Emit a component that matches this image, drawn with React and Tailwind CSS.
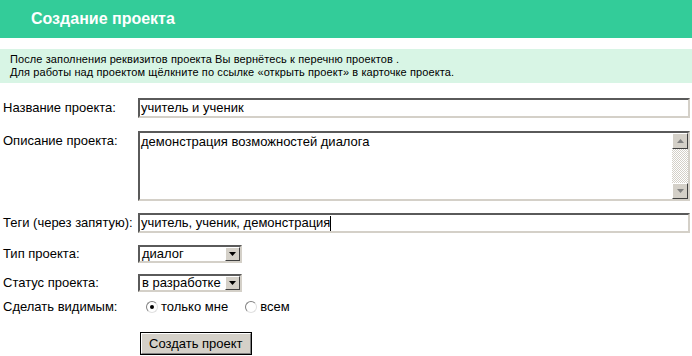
import React from 'react';

const font = "font-['Liberation_Sans',Arial,sans-serif]";
const inset = 'border-2 border-t-[#5a5a5a] border-l-[#5a5a5a] border-b-[#d4d0c8] border-r-[#d4d0c8] bg-white';

const Label = ({ children, className = '' }) => (
  <div className={`w-[138px] shrink-0 pl-[3px] text-[13px] leading-[16px] text-black ${className}`}>{children}</div>
);

const ArrowBtn = ({ dir = 'down', disabled, w = 16, h = 16 }) => (
  <div
    className="bg-[#d4d0c8] border border-t-white border-l-white border-b-[#404040] border-r-[#404040] flex items-center justify-center shrink-0"
    style={{ width: w, height: h }}
  >
    <svg width="7" height="4" viewBox="0 0 7 4">
      {dir === 'down'
        ? <path d="M0 0h7L3.5 4z" fill={disabled ? '#808080' : '#000'} />
        : <path d="M0 4h7L3.5 0z" fill={disabled ? '#808080' : '#000'} />}
    </svg>
  </div>
);

const Select = ({ value }) => (
  <div className={`${inset} w-[104px] h-[18px] flex items-center`}>
    <span className="flex-1 pl-[2px] text-[13px] leading-[14px] text-black whitespace-nowrap overflow-hidden">{value}</span>
    <ArrowBtn dir="down" w={15} h={14} />
  </div>
);

const Radio = ({ checked }) => (
  <span className="w-[12px] h-[12px] rounded-full border border-t-[#808080] border-l-[#808080] border-b-[#e0e0e0] border-r-[#e0e0e0] bg-white flex items-center justify-center">
    {checked && <span className="w-[4px] h-[4px] rounded-full bg-black" />}
  </span>
);

export default function App() {
  return (
    <div className={`w-[692px] h-[356px] bg-white overflow-hidden ${font}`}>
      <div className="h-[38px] bg-[#33cc99] flex items-center pl-[31px]">
        <h1 className="text-white font-bold text-[16px]">Создание проекта</h1>
      </div>

      <div className="mt-[11px] h-[34px] bg-[#d8f5e5] pl-[10px] pt-[4px] text-[11px] leading-[13px] tracking-[0.1px] text-black">
        <p>После заполнения реквизитов проекта Вы вернётесь к перечню проектов .</p>
        <p>Для работы над проектом щёлкните по ссылке «открыть проект» в карточке проекта.</p>
      </div>

      <div className="mt-[15px] flex flex-col">
        <div className="flex items-center">
          <Label>Название проекта:</Label>
          <div className={`${inset} flex-1 mr-[2px] h-[20px] pl-[1px] text-[13px] leading-[16px] flex items-center`}>учитель и ученик</div>
        </div>

        <div className="flex mt-[13px]">
          <Label className="pt-[2px]">Описание проекта:</Label>
          <div className={`${inset} flex-1 mr-[2px] h-[70px] flex`}>
            <div className="flex-1 pl-[1px] pt-[1px] text-[13px] leading-[16px]">демонстрация возможностей диалога</div>
            <div className="w-[16px] flex flex-col bg-[repeating-conic-gradient(#d4d0c8_0_25%,#ffffff_0_50%)] bg-[length:2px_2px]">
              <ArrowBtn dir="up" disabled />
              <div className="flex-1" />
              <ArrowBtn dir="down" disabled />
            </div>
          </div>
        </div>

        <div className="flex items-center mt-[12px]">
          <Label>Теги (через запятую):</Label>
          <div className={`${inset} flex-1 mr-[2px] h-[20px] pl-[1px] text-[13px] leading-[16px] flex items-center`}>
            учитель, ученик, демонстрация<span className="inline-block w-px h-[15px] bg-black" />
          </div>
        </div>

        <div className="flex items-center mt-[12px]">
          <Label>Тип проекта:</Label>
          <Select value="диалог" />
        </div>

        <div className="flex items-center mt-[11px]">
          <Label>Статус проекта:</Label>
          <Select value="в разработке" />
        </div>

        <div className="flex items-center mt-[7px]">
          <Label>Сделать видимым:</Label>
          <div className="flex items-center text-[13px] leading-[16px] pl-[8px]">
            <Radio checked />
            <span className="ml-[3px]">только мне</span>
            <span className="ml-[17px]"><Radio /></span>
            <span className="ml-[3px]">всем</span>
          </div>
        </div>

        <div className="flex mt-[17px]">
          <div className="w-[140px] shrink-0" />
          <button className="h-[23px] bg-[#d4d0c8] border border-black text-[13px] leading-[16px] text-black">
            <span className="h-full px-[7px] border border-t-white border-l-white border-b-[#808080] border-r-[#808080] flex items-center">Создать проект</span>
          </button>
        </div>
      </div>
    </div>
  );
}
